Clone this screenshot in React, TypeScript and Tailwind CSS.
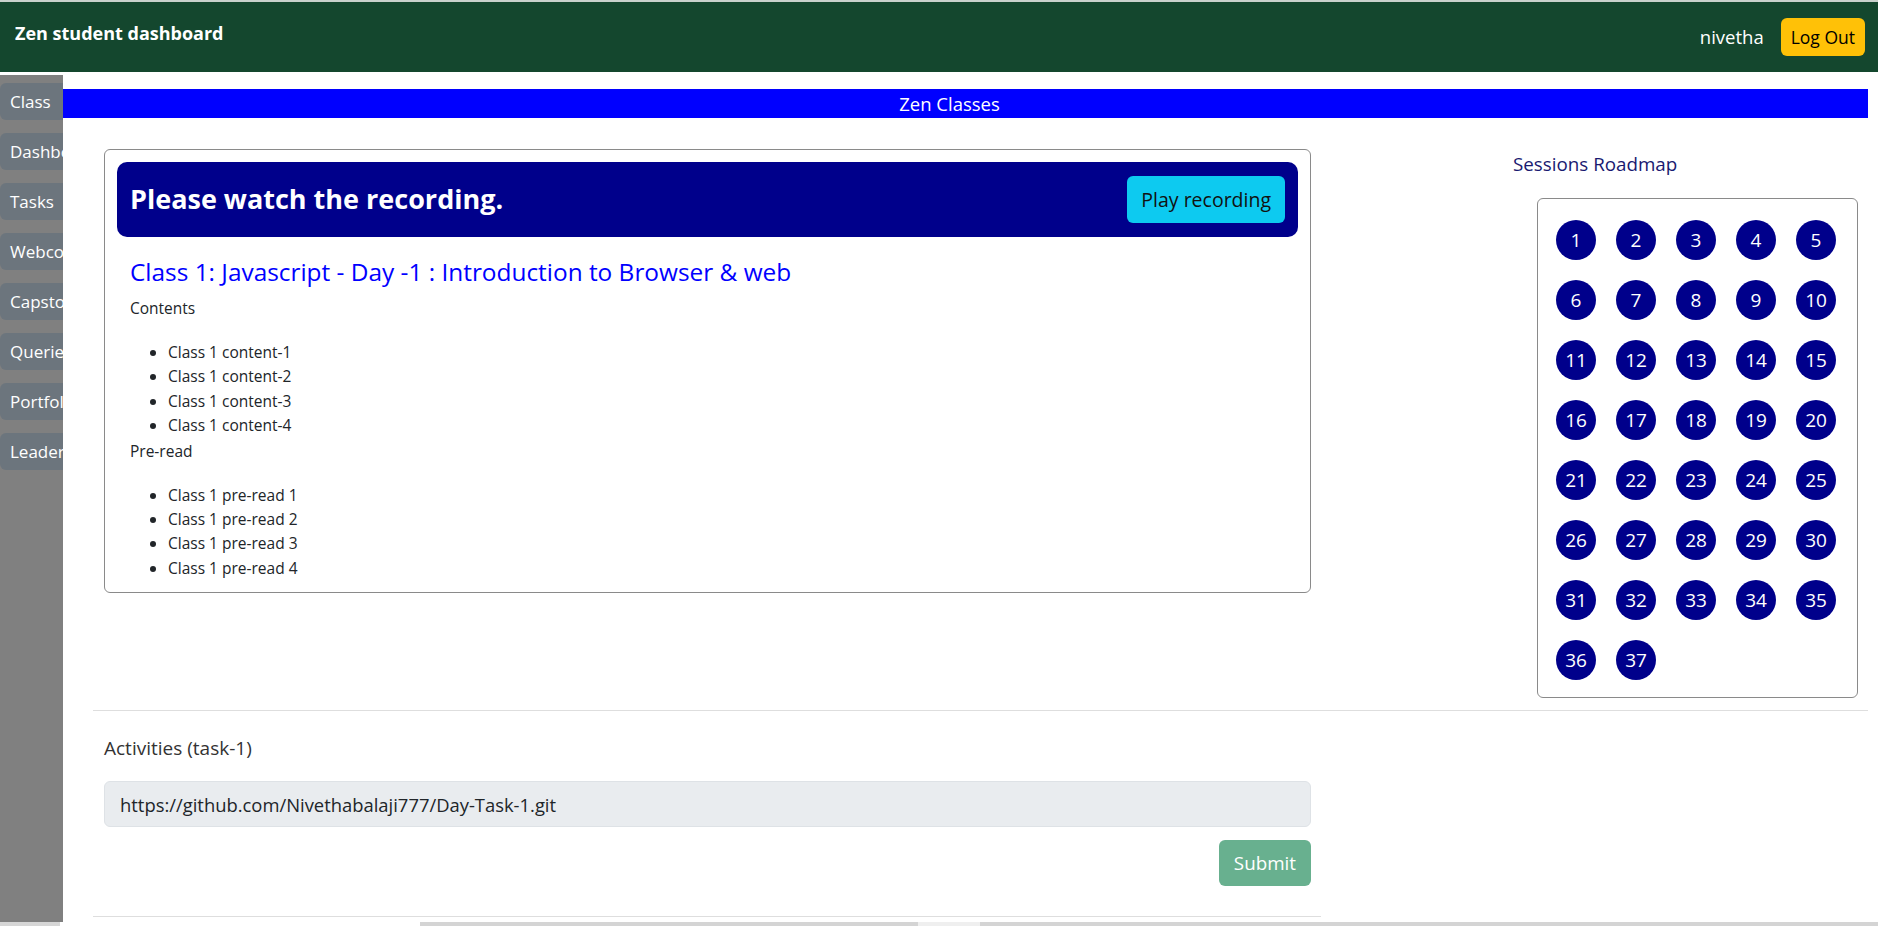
import { useState } from 'react'

const navItems = ['Class', 'Dashboard', 'Tasks', 'Webcode', 'Capstone', 'Queries', 'Portfolio', 'Leaderboard']
const contents = ['Class 1 content-1', 'Class 1 content-2', 'Class 1 content-3', 'Class 1 content-4']
const preReads = ['Class 1 pre-read 1', 'Class 1 pre-read 2', 'Class 1 pre-read 3', 'Class 1 pre-read 4']
const sessions = Array.from({ length: 37 }, (_, i) => i + 1)

function Header() {
  return (
    <div className="h-[72px] shrink-0 flex items-center justify-between bg-[#14472e] border-t-2 border-[#c9d1cc] pl-[15px] pr-[13px]">
      <span className="text-white font-bold text-[18px] mb-[8px]">Zen student dashboard</span>
      <div className="flex items-center gap-[17px]">
        <span className="text-white text-[18.5px]">nivetha</span>
        <button className="h-[38px] px-[10px] bg-[#ffc107] text-black text-[17.5px] rounded-md">Log Out</button>
      </div>
    </div>
  )
}

function Sidebar({ active, onSelect }: { active: string; onSelect: (v: string) => void }) {
  return (
    <div className="w-[63px] shrink-0 mt-[3px] bg-[#808080] overflow-hidden flex flex-col gap-[13px] pt-[8px]">
      {navItems.map((item) => (
        <button
          key={item}
          onClick={() => onSelect(item)}
          className={`h-[37px] w-[110px] shrink-0 rounded-md text-left pl-[10px] text-white text-[17px] whitespace-nowrap ${
            active === item ? 'bg-[#6c757d]' : 'bg-[#6c757d]'
          }`}
        >
          {item}
        </button>
      ))}
    </div>
  )
}

function ClassCard() {
  return (
    <div className="w-[1207px] mt-[31px] border border-[#8a8a8a] rounded-md pt-[12px] pb-[12px] self-start">
      {/* Banner */}
      <div className="ml-[12px] mr-[12px] h-[75px] bg-[#00008b] rounded-[10px] flex items-center justify-between pl-[13px] pr-[13px]">
        <h3 className="text-white font-bold text-[27px]">Please watch the recording.</h3>
        <button className="h-[47px] px-[14px] bg-[#0dcaf0] text-[#111] text-[19.5px] rounded-md">Play recording</button>
      </div>

      <div className="pl-[25px] mt-[20px]">
        <h4 className="text-[#0000ff] text-[24.4px] leading-[29px]">
          Class 1: Javascript - Day -1 : Introduction to Browser &amp; web
        </h4>
        <p className="text-[#212529] text-[15.5px] leading-[24px] mt-[10px]">Contents</p>
        <ul className="list-disc pl-[38px] mt-[20px] text-[#212529] text-[15.5px] leading-[24.4px]">
          {contents.map((c) => (
            <li key={c}>{c}</li>
          ))}
        </ul>
        <p className="text-[#212529] text-[15.5px] leading-[24px] mt-[1px]">Pre-read</p>
        <ul className="list-disc pl-[38px] mt-[20px] text-[#212529] text-[15.5px] leading-[24.4px]">
          {preReads.map((c) => (
            <li key={c}>{c}</li>
          ))}
        </ul>
      </div>
    </div>
  )
}

function Roadmap() {
  return (
    <div className="w-[345px] flex flex-col mt-[33px]">
      <span className="text-[#191970] text-[18.8px] leading-[27px]">Sessions Roadmap</span>
      <div className="ml-[24px] mt-[20px] w-[321px] h-[500px] border border-[#8a8a8a] rounded-md pt-[21px] pl-[18px]">
        <div className="grid grid-cols-5 gap-[20px] w-[280px]">
          {sessions.map((n) => (
            <div
              key={n}
              className="w-[40px] h-[40px] rounded-full bg-[#00008b] text-white text-[19px] flex items-center justify-center cursor-pointer"
            >
              {n}
            </div>
          ))}
        </div>
      </div>
    </div>
  )
}

function Activities() {
  const [url, setUrl] = useState('https://github.com/Nivethabalaji777/Day-Task-1.git')
  return (
    <div className="pl-[41px] w-[1248px]">
      <p className="text-[#333] text-[19px] leading-[26px] mt-[24px]">Activities (task-1)</p>
      <input
        value={url}
        onChange={(e) => setUrl(e.target.value)}
        disabled
        className="mt-[20px] w-[1207px] h-[46px] bg-[#e9ecef] border border-[#dee2e6] rounded-md px-[15px] text-[18.4px] text-[#212529]"
      />
      <div className="flex justify-end mt-[13px]">
        <button className="h-[46px] px-[15px] bg-[#198754] opacity-65 text-white text-[18.8px] rounded-md">Submit</button>
      </div>
    </div>
  )
}

export default function App() {
  const [active, setActive] = useState('Class')

  return (
    <div className="w-full h-[926px] overflow-hidden flex flex-col bg-white font-['Open_Sans',sans-serif]">
      <Header />

      <div className="flex flex-1 min-h-0">
        <Sidebar active={active} onSelect={setActive} />

        {/* Main */}
        <div className="flex-1 flex flex-col pt-[17px]">
          <div className="h-[29px] mr-[10px] bg-[#0000ff] text-white text-[18.5px] leading-[29px] text-center pr-[32px]">
            Zen Classes
          </div>

          <div className="flex pl-[41px] pr-[20px] justify-between">
            <ClassCard />
            <Roadmap />
          </div>

          <div className="ml-[30px] mr-[10px] mt-[12px] border-t border-[#dedede]" />

          <Activities />

          <div className="ml-[30px] w-[1228px] mt-[30px] border-t border-[#dedede]" />
        </div>
      </div>

      {/* bottom scroll strip */}
      <div className="h-[4px] shrink-0 flex">
        <div className="w-[60px] bg-[#d6d6d6]" />
        <div className="w-[360px] bg-white" />
        <div className="w-[498px] bg-[#d4d4d4]" />
        <div className="w-[62px] bg-[#efefef]" />
        <div className="flex-1 bg-[#d4d4d4]" />
      </div>
    </div>
  )
}
